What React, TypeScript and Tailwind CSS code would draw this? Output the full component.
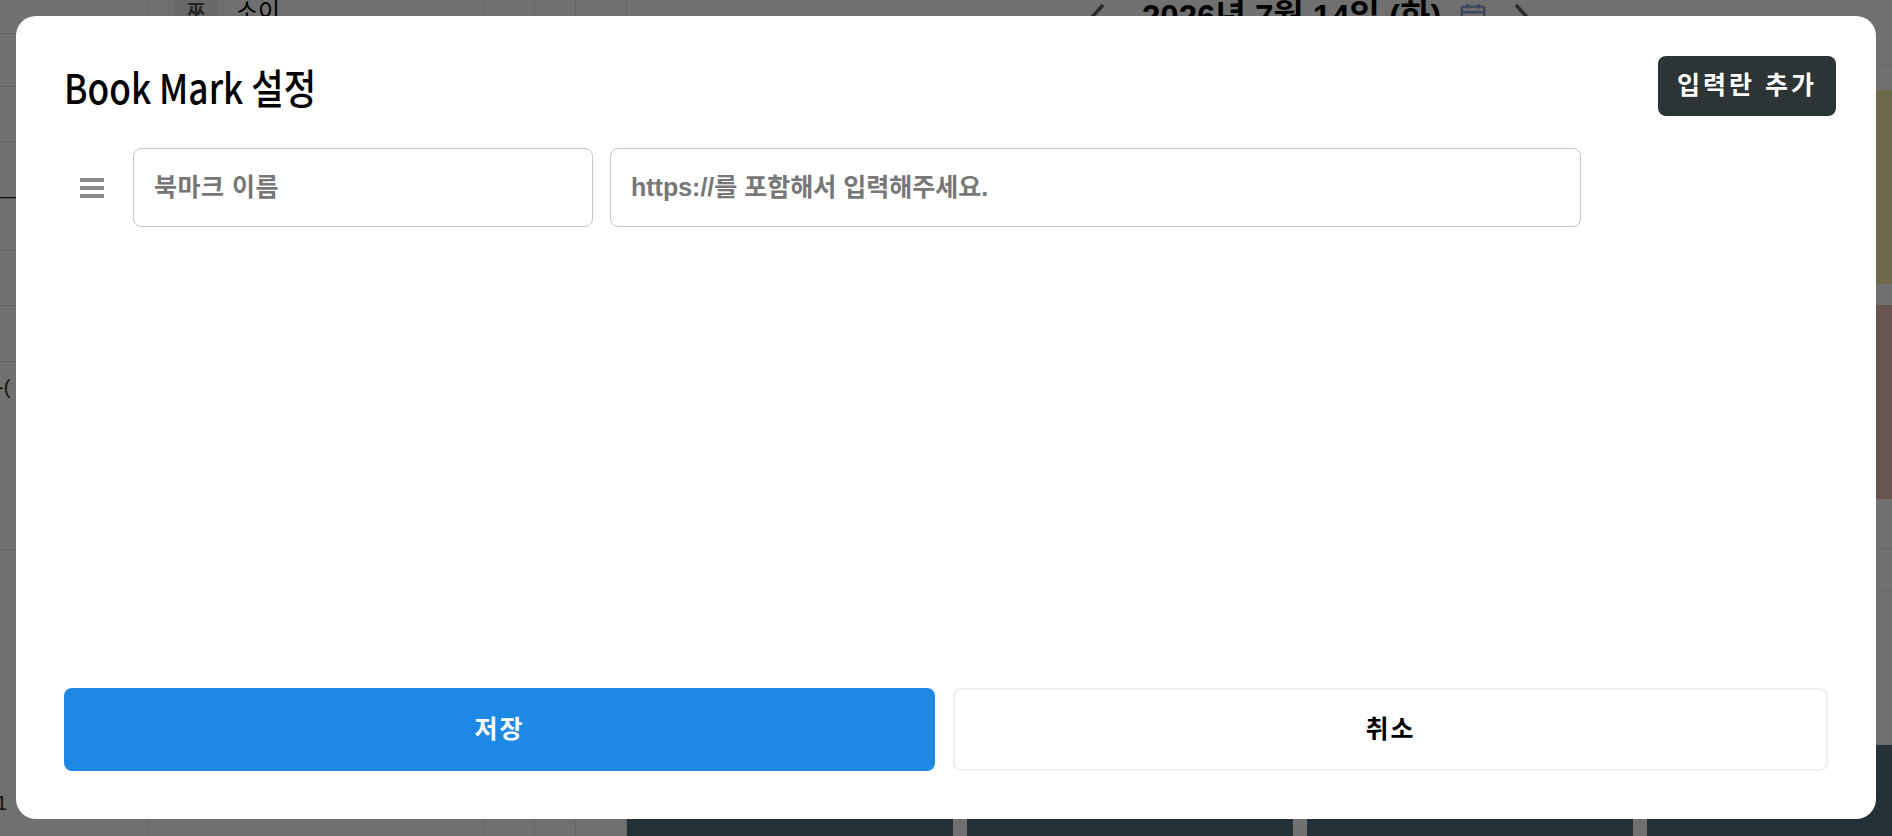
import React from "react";

function LeftRows() {
  return (
    <div className="flex w-[149px] shrink-0 flex-col border-r border-[#646464] text-[20px] text-[#111]">
      <div className="h-[34px] border-b border-[#646464]" />
      <div className="h-[53px] border-b border-[#646464]" />
      <div className="h-[55px] border-b border-[#646464]" />
      <div className="flex h-[109px] items-center border-b border-[#646464]">
        <span className="-ml-[12px] leading-none">0—</span>
      </div>
      <div className="h-[55px] border-b border-[#646464]" />
      <div className="h-[56px] border-b border-[#646464]" />
      <div className="flex h-[188px] flex-col border-b border-[#646464]">
        <span className="-ml-[14px] mt-[15px] leading-none">1-(</span>
      </div>
      <div className="flex flex-1 flex-col">
        <span className="-ml-[6px] mt-[205px] leading-none">-</span>
        <span className="-ml-[4px] mt-[18px] leading-none">1</span>
      </div>
    </div>
  );
}

function DarkColumn({ events }: { events?: boolean }) {
  return (
    <div className="flex w-[326px] shrink-0 flex-col">
      <div className="h-[34px] border-b border-[#666]" />
      {events ? (
        <>
          <div className="h-[24px]" />
          <div className="h-[194px] bg-[#6d6a4b]" />
          <div className="h-[21px]" />
          <div className="h-[194px] bg-[#69534e]" />
          <div className="h-[50px] border-b border-[#666]" />
          <div className="h-[42px] border-b border-[#666]" />
        </>
      ) : null}
      <div className="flex-1" />
      <div className="h-[91px] bg-[#253139]" />
    </div>
  );
}

function Background() {
  return (
    <div className="flex h-full w-full">
      <LeftRows />
      <div className="w-[335px] shrink-0 border-r border-[#646464]">
        <div className="-mt-[10px] flex items-center pl-[25px]">
          <div className="flex h-[44px] w-[44px] items-center justify-center rounded-md bg-[#686868] text-[18px] font-bold text-[#222]">
            巫
          </div>
          <span className="ml-[18px] text-[24px] leading-none text-black">소이</span>
        </div>
      </div>
      <div className="w-[51px] shrink-0 border-r border-[#666]" />
      <div className="w-[41px] shrink-0 border-r border-[#666]" />
      <div className="w-[51px] shrink-0 border-r border-[#666]" />
      <div className="flex min-w-0 flex-1 flex-col overflow-hidden">
        <div className="flex h-[32px] shrink-0 items-center pl-[463px]">
          <svg width="16" height="28" viewBox="0 0 16 28" className="shrink-0">
            <path d="M13 3 L3 14 L13 25" stroke="#2b2b2b" strokeWidth="3.5" fill="none" />
          </svg>
          <span className="ml-[36px] text-[33px] font-bold leading-none text-black">2026년 7월 14일 (화)</span>
          <svg width="28" height="30" viewBox="0 0 30 30" className="ml-[18px] shrink-0">
            <rect x="3" y="5" width="24" height="22" rx="2" stroke="#3d4462" strokeWidth="2.5" fill="none" />
            <line x1="3" y1="11" x2="27" y2="11" stroke="#3d4462" strokeWidth="2.5" />
            <line x1="9" y1="2" x2="9" y2="7" stroke="#3d4462" strokeWidth="2.5" />
            <line x1="21" y1="2" x2="21" y2="7" stroke="#3d4462" strokeWidth="2.5" />
          </svg>
          <svg width="16" height="28" viewBox="0 0 16 28" className="ml-[26px] shrink-0">
            <path d="M3 3 L13 14 L3 25" stroke="#2b2b2b" strokeWidth="3.5" fill="none" />
          </svg>
        </div>
        <div className="flex flex-1 gap-[14px]">
          <DarkColumn />
          <DarkColumn />
          <DarkColumn />
          <DarkColumn events />
        </div>
      </div>
    </div>
  );
}

function Hamburger() {
  return (
    <svg width="24" height="20" viewBox="0 0 24 20" className="shrink-0">
      <rect x="0" y="0" width="24" height="4" fill="#8a8a8a" />
      <rect x="0" y="8" width="24" height="4" fill="#8a8a8a" />
      <rect x="0" y="16" width="24" height="4" fill="#8a8a8a" />
    </svg>
  );
}

export default function App() {
  return (
    <div className="relative h-[836px] w-[1892px] overflow-hidden bg-[#707070] font-['Liberation_Sans','Noto_Sans_CJK_KR',sans-serif]">
      <Background />
      <div className="absolute left-4 top-4 flex h-[803px] w-[1860px] flex-col rounded-[20px] bg-white px-12 pb-12 pt-10">
        <div className="-mr-2 flex h-[60px] items-center justify-between">
          <h2 className="inline-block origin-left scale-x-[0.86] font-['Noto_Sans_CJK_KR',sans-serif] text-[41px] font-medium leading-none text-black">
            Book Mark 설정
          </h2>
          <button className="flex h-[60px] w-[178px] items-center justify-center rounded-lg bg-[#2d3436] text-[25px] font-bold tracking-[3px] text-white">
            입력란 추가
          </button>
        </div>
        <div className="mt-8 flex items-center pl-4">
          <Hamburger />
          <input
            className="ml-[29px] h-[79px] w-[460px] rounded-lg border border-[#c8c8c8] bg-white pl-5 text-[25px] font-bold tracking-[0.5px] text-[#333] outline-none placeholder:text-[#777]"
            placeholder="북마크 이름"
          />
          <input
            className="ml-[17px] h-[79px] w-[971px] rounded-lg border border-[#c8c8c8] bg-white pl-5 text-[25px] font-bold text-[#333] outline-none placeholder:text-[#777]"
            placeholder="https://를 포함해서 입력해주세요."
          />
        </div>
        <div className="flex-1" />
        <div className="flex gap-[18px]">
          <button className="flex h-[83px] flex-1 items-center justify-center rounded-lg bg-[#1e88e5] text-[25px] font-bold tracking-[2px] text-white">
            저장
          </button>
          <button className="flex h-[83px] flex-1 items-center justify-center rounded-lg border-2 border-[#efefef] bg-white text-[25px] font-bold tracking-[2px] text-black">
            취소
          </button>
        </div>
      </div>
    </div>
  );
}
